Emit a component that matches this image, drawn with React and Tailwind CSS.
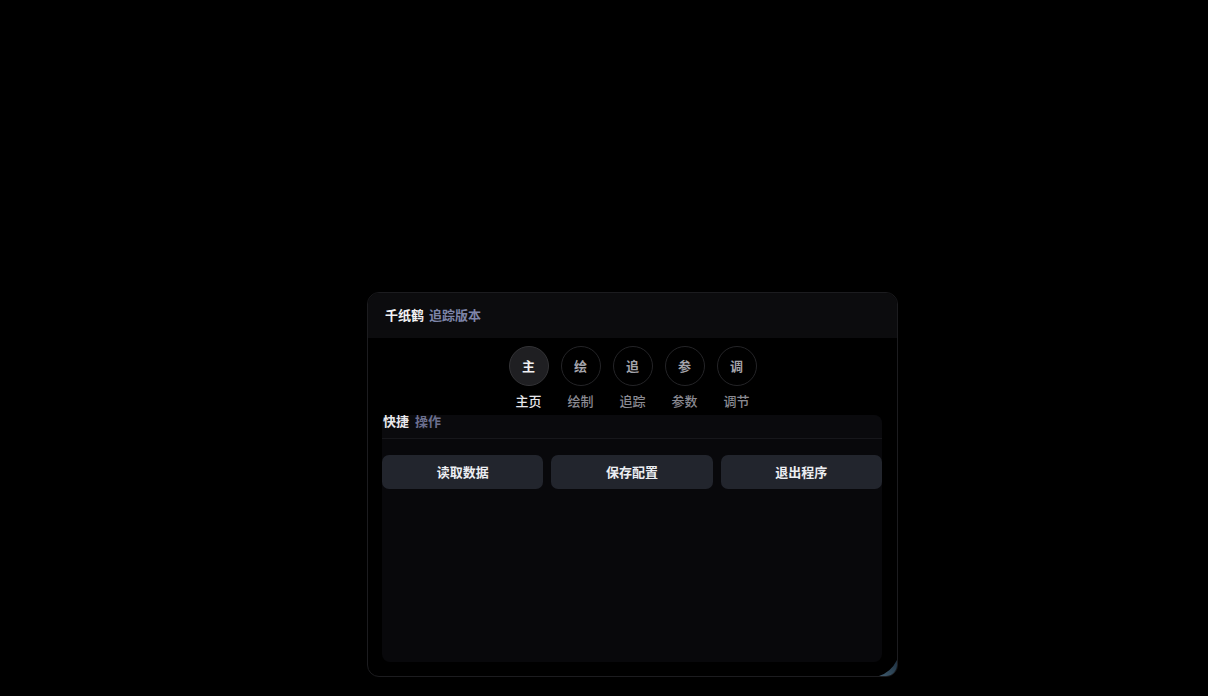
import React from "react";

const tabs = [
  { c: "主", l: "主页", active: true },
  { c: "绘", l: "绘制" },
  { c: "追", l: "追踪" },
  { c: "参", l: "参数" },
  { c: "调", l: "调节" },
];

export default function App() {
  return (
    <div
      className="w-[1208px] h-[696px] bg-black overflow-hidden pl-[367px] pt-[292px]"
      style={{ fontFamily: '"Noto Sans CJK SC", "Noto Sans", sans-serif' }}
    >
      <div className="relative w-[531px] h-[385px] rounded-[12px] border border-[#1c1c1f] bg-black flex flex-col overflow-hidden">
        <div className="h-[45px] shrink-0 bg-[#0c0c0e] flex items-center pl-[17px] pb-[3px] gap-[5px] text-[13px] font-bold leading-none">
          <span className="text-[#f2f2f4]">千纸鹤</span>
          <span className="text-[#7d84a8]">追踪版本</span>
        </div>
        <div className="flex justify-center gap-[12px] pt-[8px]">
          {tabs.map((t) => (
            <div key={t.c} className="flex flex-col items-center w-[40px]">
              <div
                className={
                  t.active
                    ? "w-[40px] h-[40px] rounded-full border border-[#333336] bg-[#1f1f22] flex items-center justify-center text-[13px] font-bold text-[#f0f0f2]"
                    : "w-[40px] h-[40px] rounded-full border border-[#242427] bg-black flex items-center justify-center text-[13px] font-bold text-[#a3a3aa]"
                }
              >
                {t.c}
              </div>
              <div
                className={
                  t.active
                    ? "mt-[7px] text-[13px] leading-[16px] font-medium whitespace-nowrap text-[#e6e6ea]"
                    : "mt-[7px] text-[13px] leading-[16px] font-medium whitespace-nowrap text-[#8a8a92]"
                }
              >
                {t.l}
              </div>
            </div>
          ))}
        </div>
        <div className="ml-[14px] mr-[15px] mt-[6px] h-[247px] rounded-[8px] bg-[#08080b] flex flex-col">
          <div className="h-[24px] shrink-0 border-b border-[#17171b] bg-[#0a0a0d] rounded-t-[8px] flex items-start pl-[1px] gap-[6px] text-[13px] font-bold leading-[12px]">
            <span className="text-[#e8e8ec]">快捷</span>
            <span className="text-[#6b6f8e]">操作</span>
          </div>
          <div className="grid grid-cols-3 gap-[8px] mt-[16px]">
            {["读取数据", "保存配置", "退出程序"].map((b) => (
              <div
                key={b}
                className="h-[34px] rounded-[7px] bg-[#22252d] flex items-center justify-center text-[13px] font-bold text-[#eceef2]"
              >
                {b}
              </div>
            ))}
          </div>
        </div>
        <svg className="absolute right-0 bottom-0" width="18" height="16" viewBox="0 0 18 16">
          <defs>
            <linearGradient id="g" x1="0" y1="1" x2="1" y2="0">
              <stop offset="0" stopColor="#3f5b6e" />
              <stop offset="1" stopColor="#1e3040" />
            </linearGradient>
          </defs>
          <path d="M18 0 L18 8 Q18 16 10 16 L0 16 Q12 12 18 0 Z" fill="url(#g)" />
        </svg>
      </div>
    </div>
  );
}
